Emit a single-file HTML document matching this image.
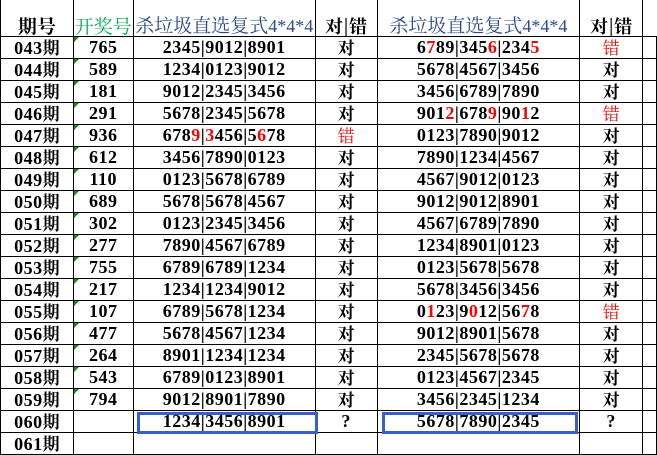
<!DOCTYPE html>
<html><head><meta charset="utf-8"><style>
body{margin:0;background:#fff;width:657px;height:446px;overflow:hidden;position:relative;font-family:"Liberation Serif","Noto Serif CJK SC",serif;}
table{border-collapse:collapse;table-layout:fixed;position:absolute;left:0;top:0;}
tr{height:22px}
td{border:1px solid #000;height:20px;padding:0;text-align:center;font-size:18px;font-weight:bold;letter-spacing:0.5px;line-height:20px;white-space:nowrap;overflow:hidden;position:relative;color:#000;}
tr.h{height:36px}
tr.h td{height:34px;vertical-align:bottom;line-height:20px;padding-bottom:0;border-top:none;letter-spacing:0;font-weight:normal}
.r{color:#f00}
.c{font-family:"Noto Serif CJK SC",serif;font-weight:bold;font-size:17px;letter-spacing:0;line-height:20px}
.cr{font-family:"Noto Serif CJK SC",serif;font-size:17px;color:#f00;letter-spacing:0;font-weight:normal}
.g::before{content:"";position:absolute;left:0;top:0;border-top:5px solid #1a8a1a;border-right:5px solid transparent;}
.hb{color:#2e4a8c;font-size:18px}
.box{position:absolute;border:3px solid #3a5fcd;height:16px;}
</style></head><body>
<table>
<colgroup><col style="width:73px"><col style="width:60px"><col style="width:182px"><col style="width:62px"><col style="width:203px"><col style="width:63px"><col style="width:14px"></colgroup>
<tr class="h"><td class="c" style="font-size:19px;font-weight:bold">期号</td><td class="c" style="color:#00b050;font-weight:normal;font-size:19px">开奖号</td><td class="hb"><span class="c" style="font-weight:normal;font-size:19px">杀垃圾直选复式</span>4*4*4</td><td class="c" style="font-size:18px;font-weight:bold">对|错</td><td class="hb"><span class="c" style="font-weight:normal;font-size:19px">杀垃圾直选复式</span>4*4*4</td><td class="c" style="font-size:18px;font-weight:bold">对|错</td><td style="border:none"></td></tr>
<tr><td>043<span class="c">期</span></td><td class="g">765</td><td>2345|9012|8901</td><td class="c">对</td><td>6<span class="r">7</span>89|345<span class="r">6</span>|234<span class="r">5</span></td><td class="cr">错</td><td></td></tr>
<tr><td>044<span class="c">期</span></td><td class="g">589</td><td>1234|0123|9012</td><td class="c">对</td><td>5678|4567|3456</td><td class="c">对</td><td></td></tr>
<tr><td>045<span class="c">期</span></td><td class="g">181</td><td>9012|2345|3456</td><td class="c">对</td><td>3456|6789|7890</td><td class="c">对</td><td></td></tr>
<tr><td>046<span class="c">期</span></td><td class="g">291</td><td>5678|2345|5678</td><td class="c">对</td><td>901<span class="r">2</span>|678<span class="r">9</span>|90<span class="r">1</span>2</td><td class="cr">错</td><td></td></tr>
<tr><td>047<span class="c">期</span></td><td class="g">936</td><td>678<span class="r">9</span>|<span class="r">3</span>456|5<span class="r">6</span>78</td><td class="cr">错</td><td>0123|7890|9012</td><td class="c">对</td><td></td></tr>
<tr><td>048<span class="c">期</span></td><td class="g">612</td><td>3456|7890|0123</td><td class="c">对</td><td>7890|1234|4567</td><td class="c">对</td><td></td></tr>
<tr><td>049<span class="c">期</span></td><td class="g">110</td><td>0123|5678|6789</td><td class="c">对</td><td>4567|9012|0123</td><td class="c">对</td><td></td></tr>
<tr><td>050<span class="c">期</span></td><td class="g">689</td><td>5678|5678|4567</td><td class="c">对</td><td>9012|9012|8901</td><td class="c">对</td><td></td></tr>
<tr><td>051<span class="c">期</span></td><td class="g">302</td><td>0123|2345|3456</td><td class="c">对</td><td>4567|6789|7890</td><td class="c">对</td><td></td></tr>
<tr><td>052<span class="c">期</span></td><td class="g">277</td><td>7890|4567|6789</td><td class="c">对</td><td>1234|8901|0123</td><td class="c">对</td><td></td></tr>
<tr><td>053<span class="c">期</span></td><td class="g">755</td><td>6789|6789|1234</td><td class="c">对</td><td>0123|5678|5678</td><td class="c">对</td><td></td></tr>
<tr><td>054<span class="c">期</span></td><td class="g">217</td><td>1234|1234|9012</td><td class="c">对</td><td>5678|3456|3456</td><td class="c">对</td><td></td></tr>
<tr><td>055<span class="c">期</span></td><td class="g">107</td><td>6789|5678|1234</td><td class="c">对</td><td>0<span class="r">1</span>23|9<span class="r">0</span>12|56<span class="r">7</span>8</td><td class="cr">错</td><td></td></tr>
<tr><td>056<span class="c">期</span></td><td class="g">477</td><td>5678|4567|1234</td><td class="c">对</td><td>9012|8901|5678</td><td class="c">对</td><td></td></tr>
<tr><td>057<span class="c">期</span></td><td class="g">264</td><td>8901|1234|1234</td><td class="c">对</td><td>2345|5678|5678</td><td class="c">对</td><td></td></tr>
<tr><td>058<span class="c">期</span></td><td class="g">543</td><td>6789|0123|8901</td><td class="c">对</td><td>0123|4567|2345</td><td class="c">对</td><td></td></tr>
<tr><td>059<span class="c">期</span></td><td class="g">794</td><td>9012|8901|7890</td><td class="c">对</td><td>3456|2345|1234</td><td class="c">对</td><td></td></tr>
<tr><td>060<span class="c">期</span></td><td></td><td>1234|3456|8901</td><td>?</td><td>5678|7890|2345</td><td>?</td><td></td></tr>
<tr><td>061<span class="c">期</span></td><td></td><td></td><td></td><td></td><td></td><td></td></tr>
</table>
<div class="box" style="left:137px;top:412px;width:175px"></div>
<div class="box" style="left:382px;top:412px;width:190px"></div>
</body></html>
